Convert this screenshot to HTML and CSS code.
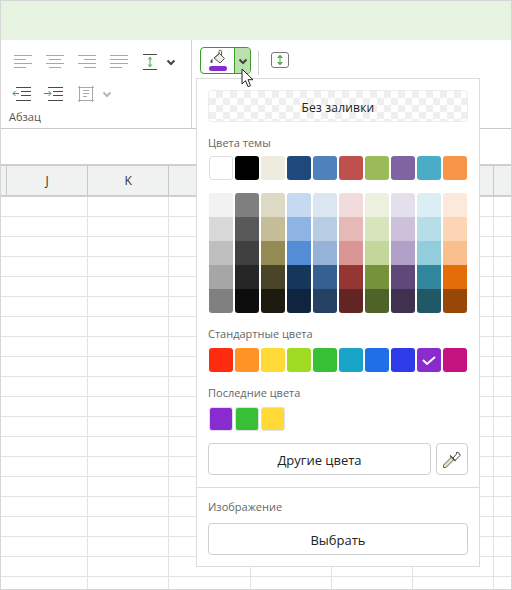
FILE: index.html
```html
<!DOCTYPE html>
<html lang="ru">
<head>
<meta charset="utf-8">
<title>Заливка</title>
<link rel="stylesheet" href="styles.css">
</head>
<body>
<div class="app">
  <div class="topbar"></div>
  <div class="ribbon">
    <section class="group-para">
      <div class="tool-row row-one">
        <svg class="ico" width="20" height="14" viewBox="0 0 20 14"><path class="ln" d="M1 .5h18M1 4.500h12M1 8.500h18M1 12.500h12"/></svg>
        <svg class="ico" width="20" height="14" viewBox="0 0 20 14"><path class="ln" d="M1 .5h18M4 4.500h12M1 8.500h18M4 12.500h12"/></svg>
        <svg class="ico" width="20" height="14" viewBox="0 0 20 14"><path class="ln" d="M1 .5h18M7 4.500h12M1 8.500h18M7 12.500h12"/></svg>
        <svg class="ico" width="20" height="14" viewBox="0 0 20 14"><path class="ln" d="M1 .5h18M1 4.500h18M1 8.500h18M1 12.500h12"/></svg>
        <svg class="ico spacing" width="16" height="16" viewBox="0 0 16 16"><path class="dk" d="M1 .5h14M1 15.500h14"/><path class="gr" d="M8 3v10"/><path class="grf" d="M5.500 5.500L8 2.500l2.500 3zM5.500 10.500L8 13.500l2.500-3z"/></svg>
        <svg class="chev" width="10" height="7" viewBox="0 0 10 7"><path d="M1.500 1.500L5 5l3.500-3.500" fill="none" stroke="#444" stroke-width="2"/></svg>
      </div>
      <div class="tool-row row-two">
        <svg class="ico" width="20" height="14" viewBox="0 0 20 14"><path class="dk" d="M4 .5h15M9 4.500h10M9 8.500h10M4 13.500h15"/><path class="gr2" d="M7 6.500H1M3.500 4L1 6.500 3.500 9"/></svg>
        <svg class="ico" width="20" height="14" viewBox="0 0 20 14"><path class="dk" d="M4 .5h15M9 4.500h10M9 8.500h10M4 13.500h15"/><path class="gr2" d="M0 6.500h7M4.500 4L7 6.500 4.500 9"/></svg>
        <svg class="ico margins" width="16" height="16" viewBox="0 0 16 16"><path class="ln" d="M0 1.500h16M0 14.500h16M1.500 0v16M14.500 0v16M5 4.500h6M5 7.500h6M5 10.500h4"/></svg>
        <svg class="chev faded" width="10" height="7" viewBox="0 0 10 7"><path d="M1.500 1.500L5 5l3.500-3.500" fill="none" stroke="#b5b5b5" stroke-width="2"/></svg>
      </div>
      <div class="group-title">Абзац</div>
    </section>
    <section class="group-fill">
      <div class="split">
        <span class="split-main">
          <svg width="22" height="16" viewBox="0 0 22 16"><path d="M11.500 4.500L16.500 9.500 12 14 6 9z" fill="#e6f3df" stroke="#555" stroke-width="1"/><path d="M6 9l5.500-4.500" fill="none" stroke="#555"/><path d="M11 5V2.500a1.300 1.300 0 0 1 2.600 0V7" fill="none" stroke="#555"/><path d="M4.500 9.500c-1.500 1.500-2.200 2.400-2.200 3.200a1.200 1.200 0 0 0 2.400 0z" fill="#555"/></svg>
          <i class="fill-bar"></i>
        </span>
        <span class="split-arrow">
          <svg width="10" height="7" viewBox="0 0 10 7"><path d="M1.500 1.500L5 5l3.500-3.500" fill="none" stroke="#444" stroke-width="2"/></svg>
        </span>
      </div>
      <span class="vsep"></span>
      <span class="height-btn">
        <svg width="10" height="14" viewBox="0 0 10 14"><path d="M5 3v8" stroke="#4caf50" stroke-width="1"/><path d="M2 5l3-3.500L8 5zM2 9l3 3.500L8 9z" fill="#4caf50"/></svg>
      </span>
    </section>
  </div>
  <div class="formula"></div>
  <div class="col-heads">
    <span class="corner"></span>
    <span class="col">J</span>
    <span class="col">K</span>
    <span class="col"></span>
    <span class="col"></span>
    <span class="col"></span>
    <span class="col"></span>
    <span class="col"></span>
  </div>
  <div class="sheet"></div>

  <div class="popup">
    <div class="popup-main">
      <button class="btn no-fill">Без заливки</button>
      <div class="label first">Цвета темы</div>
      <div class="swatches">
        <i class="sw outlined c-fff"></i><i class="sw c-000"></i><i class="sw c-eee"></i><i class="sw c-1f4"></i><i class="sw c-4f8"></i><i class="sw c-c05"></i><i class="sw c-9bb"></i><i class="sw c-806"></i><i class="sw c-4ba"></i><i class="sw c-f79"></i>
      </div>
      <div class="ramps">
        <div class="ramp"><i class="r1"></i><i class="r2"></i><i class="r3"></i><i class="r4"></i><i class="r5"></i></div>
        <div class="ramp"><i class="r6"></i><i class="r7"></i><i class="r8"></i><i class="r9"></i><i class="r10"></i></div>
        <div class="ramp"><i class="r11"></i><i class="r12"></i><i class="r13"></i><i class="r14"></i><i class="r15"></i></div>
        <div class="ramp"><i class="r16"></i><i class="r17"></i><i class="r18"></i><i class="r19"></i><i class="r20"></i></div>
        <div class="ramp"><i class="r21"></i><i class="r22"></i><i class="r23"></i><i class="r24"></i><i class="r25"></i></div>
        <div class="ramp"><i class="r26"></i><i class="r27"></i><i class="r28"></i><i class="r29"></i><i class="r30"></i></div>
        <div class="ramp"><i class="r31"></i><i class="r32"></i><i class="r33"></i><i class="r34"></i><i class="r35"></i></div>
        <div class="ramp"><i class="r36"></i><i class="r37"></i><i class="r38"></i><i class="r39"></i><i class="r40"></i></div>
        <div class="ramp"><i class="r41"></i><i class="r42"></i><i class="r43"></i><i class="r44"></i><i class="r45"></i></div>
        <div class="ramp"><i class="r46"></i><i class="r47"></i><i class="r48"></i><i class="r49"></i><i class="r50"></i></div>
      </div>
      <div class="label std">Стандартные цвета</div>
      <div class="swatches">
        <i class="sw s1"></i><i class="sw s2"></i><i class="sw s3"></i><i class="sw s4"></i><i class="sw s5"></i><i class="sw s6"></i><i class="sw s7"></i><i class="sw s8"></i>
        <i class="sw s9"><svg width="16" height="12" viewBox="0 0 16 12"><path d="M2 6l4 4 8-7" fill="none" stroke="#fff" stroke-width="2"/></svg></i>
        <i class="sw s10"></i>
      </div>
      <div class="label recent">Последние цвета</div>
      <div class="swatches">
        <i class="sw ringed s9"></i><i class="sw ringed s5"></i><i class="sw ringed s3"></i>
      </div>
      <div class="btn-row">
        <button class="btn more">Другие цвета</button>
        <button class="btn picker">
          <svg width="20" height="20" viewBox="0 0 20 20"><path d="M1.500 18.500v-2.500L9.500 8l2.500 2.500-8 8z" fill="#cfeabf" stroke="#666"/><path d="M8 6.500l5.500 5.500" fill="none" stroke="#444" stroke-width="1.200"/><path d="M11 9l3-3.500 1-2.500 2.500 1.500.5 2-2 2-3 3z" fill="#fff" stroke="#444"/></svg>
        </button>
      </div>
    </div>
    <div class="popup-foot">
      <div class="label">Изображение</div>
      <button class="btn choose">Выбрать</button>
    </div>
  </div>

  <svg class="cursor" width="14" height="21" viewBox="0 0 14 21"><path d="M1 1v15l3.500-3.300 2.500 6 2.500-1-2.500-6h5z" fill="#fff" stroke="#222" stroke-width="1"/></svg>
</div>
</body>
</html>
```
FILE: styles.css
```css
* { box-sizing: border-box; }
html, body { margin: 0; padding: 0; }
body { font-family: "Open Sans", "Noto Sans", sans-serif; background: #fff; }
.app {
  position: relative;
  width: 512px;
  height: 590px;
  border: 1px solid #d6d6d6;
  display: flex;
  flex-direction: column;
  overflow: hidden;
  background: #fff;
}
.topbar { height: 39px; background: #e5f3e0; flex: none; }
.ribbon { height: 89px; flex: none; display: flex; border-bottom: 1px solid #c8c8c8; }
.group-para { width: 191px; border-right: 1px solid #d2d2d2; padding: 14px 0 0 11px; display: flex; flex-direction: column; }
.tool-row { display: flex; align-items: center; height: 16px; }
.row-one .ico { margin-right: 12px; }
.row-one { padding-left: 1px; }
.row-one .spacing { margin: 0 0 0 1px; }
.row-one .chev { margin-left: 8px; }
.row-two { margin-top: 16px; }
.row-two .ico { margin-right: 12px; }
.row-two .margins { margin: 0 8px 0 2px; }
.ln { stroke: #a8a8a8; stroke-width: 1; fill: none; }
.dk { stroke: #4a4a4a; stroke-width: 1; fill: none; }
.gr { stroke: #7fc98a; stroke-width: 1.500; fill: none; }
.grf { fill: #6fc07a; }
.gr2 { stroke: #3d9c43; stroke-width: 1; fill: none; }
.group-title { font-size: 11px; color: #555; margin: 7px 0 0 -3px; line-height: 15px; }
.group-fill { flex: 1; display: flex; align-items: flex-start; padding: 7px 0 0 8px; }
.split { display: flex; width: 51px; height: 27px; border: 1px solid #3c9a26; border-radius: 4px; overflow: hidden; }
.split-main { width: 34px; border-right: 1px solid #3c9a26; display: flex; flex-direction: column; align-items: center; padding-top: 1px; }
.split-main svg { display: block; margin-left: 2px; }
.fill-bar { display: block; width: 18px; height: 5px; margin-top: 1px; border-radius: 3px; background: #8a2bcf; }
.split-arrow { flex: 1; background: #b9e0ae; display: flex; align-items: center; justify-content: center; padding-top: 1px; }
.vsep { width: 1px; height: 24px; margin: 4px 12px 0 7px; background: #d2d2d2; }
.height-btn { width: 18px; height: 16px; margin-top: 5px; border: 1px solid #777; border-radius: 3px; display: flex; align-items: center; justify-content: center; }
.formula { height: 37px; flex: none; border-bottom: 2px solid #cfcfcf; }
.col-heads { height: 31px; flex: none; display: flex; background: #f0f2f1; border-bottom: 2px solid #cfcfcf; }
.corner { width: 6px; flex: none; border-right: 1px solid #c8c8c8; }
.col { width: 81.200px; flex: none; border-right: 1px solid #c8c8c8; font-size: 12px; color: #333; display: flex; align-items: center; justify-content: center; }
.sheet {
  flex: 1;
  background-color: #fff;
  background-image:
    repeating-linear-gradient(to bottom, transparent 0 19px, #e3e3e3 19px 20px),
    repeating-linear-gradient(to right, transparent 0 80.200px, #e3e3e3 80.200px 81.200px);
  background-position: 0 0, 6px 0;
}
.popup {
  position: absolute;
  left: 195px;
  top: 77px;
  width: 284px;
  height: 489px;
  background: #fff;
  border: 1px solid #dcdcdc;
  display: flex;
  flex-direction: column;
}
.popup-main { padding: 11px 11px 12px; border-bottom: 1px solid #dcdcdc; }
.popup-foot { padding: 11px 11px; }
.btn {
  display: block;
  height: 32px;
  width: 260px;
  padding: 2px 0 0;
  border: 1px solid #cfcfcf;
  border-radius: 4px;
  background: #fff;
  font: 13px "Open Sans", "Noto Sans", sans-serif;
  color: #222;
}
.no-fill {
  border-color: #ececec;
  background-color: #fff;
  background-image: conic-gradient(#efefef 25%, #fff 0 50%, #efefef 0 75%, #fff 0);
  background-size: 14px 14px;
  font-size: 12px;
  letter-spacing: .2px;
}
.label { font-size: 11px; line-height: 15px; color: #666; }
.label.first { margin-top: 13px; margin-bottom: 6px; }
.label.std { margin-top: 13px; margin-bottom: 7px; }
.label.recent { margin-top: 13px; margin-bottom: 7px; }
.popup-foot .label { margin-bottom: 9px; }
.swatches { display: flex; gap: 2px; padding-left: 1px; }
.sw { display: flex; align-items: center; justify-content: center; width: 24px; height: 24px; border-radius: 3px; }
.outlined { border: 1px solid #ddd; }
.ringed { border: 1px solid #dde0e8; }
.ramps { display: flex; gap: 2px; margin-top: 13px; padding-left: 1px; }
.ramp { width: 24px; border-radius: 3px; overflow: hidden; }
.ramp i { display: block; height: 24px; }
.btn-row { display: flex; gap: 5px; margin-top: 12px; }
.more { width: 223px; }
.picker { width: 32px; padding: 0; display: flex; align-items: center; justify-content: center; }
.c-fff { background: #fff; } .c-000 { background: #000; } .c-eee { background: #eeece1; } .c-1f4 { background: #1f497d; }
.c-4f8 { background: #4f81bd; } .c-c05 { background: #c0504d; } .c-9bb { background: #9bbb59; } .c-806 { background: #8064a2; }
.c-4ba { background: #4bacc6; } .c-f79 { background: #f79646; }
.r1 { background: #f2f2f2; } .r2 { background: #d9d9d9; } .r3 { background: #bfbfbf; } .r4 { background: #a6a6a6; } .r5 { background: #808080; }
.r6 { background: #7f7f7f; } .r7 { background: #595959; } .r8 { background: #404040; } .r9 { background: #262626; } .r10 { background: #0d0d0d; }
.r11 { background: #ddd9c4; } .r12 { background: #c4bd97; } .r13 { background: #948a54; } .r14 { background: #4a452a; } .r15 { background: #1d1b10; }
.r16 { background: #c5d9f1; } .r17 { background: #8db4e2; } .r18 { background: #538dd5; } .r19 { background: #16365c; } .r20 { background: #0f243e; }
.r21 { background: #dce6f1; } .r22 { background: #b8cce4; } .r23 { background: #95b3d7; } .r24 { background: #366092; } .r25 { background: #244062; }
.r26 { background: #f2dcdb; } .r27 { background: #e6b8b7; } .r28 { background: #da9694; } .r29 { background: #963634; } .r30 { background: #632523; }
.r31 { background: #ebf1de; } .r32 { background: #d8e4bc; } .r33 { background: #c4d79b; } .r34 { background: #76933c; } .r35 { background: #4f6228; }
.r36 { background: #e4dfec; } .r37 { background: #ccc0da; } .r38 { background: #b1a0c7; } .r39 { background: #60497a; } .r40 { background: #403151; }
.r41 { background: #daeef3; } .r42 { background: #b7dee8; } .r43 { background: #92cddc; } .r44 { background: #31869b; } .r45 { background: #205867; }
.r46 { background: #fde9d9; } .r47 { background: #fcd5b4; } .r48 { background: #fabf8f; } .r49 { background: #e46d0a; } .r50 { background: #974706; }
.s1 { background: #ff2b0e; } .s2 { background: #ff9326; } .s3 { background: #ffd936; } .s4 { background: #a0dc23; } .s5 { background: #37bf36; }
.s6 { background: #18a4c6; } .s7 { background: #1f6fe8; } .s8 { background: #2d3ce8; } .s9 { background: #8a2bcf; } .s10 { background: #c4127f; }
.cursor { position: absolute; left: 240px; top: 67px; }
```
